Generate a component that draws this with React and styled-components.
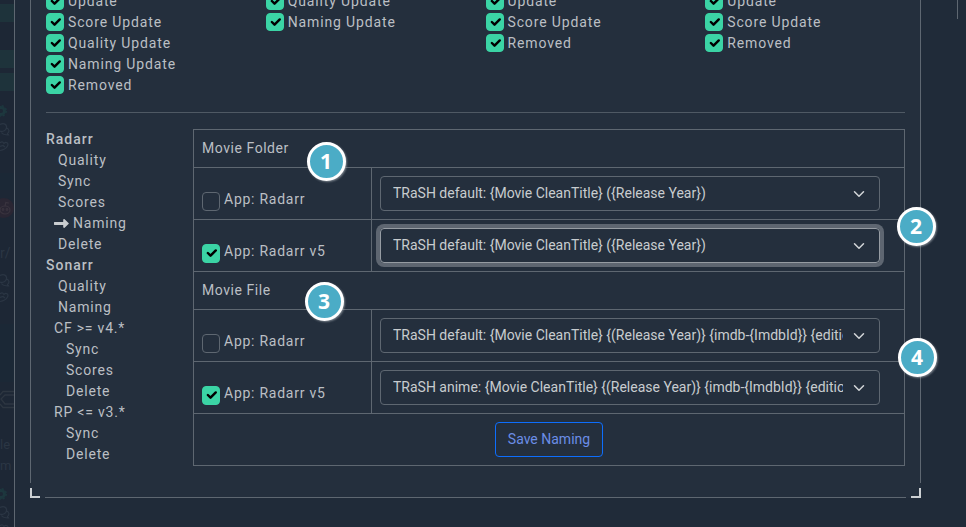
import React from "react";
import styled, { createGlobalStyle, css } from "styled-components";

const line = "#5e6771";

const GlobalStyle = createGlobalStyle`
  * { box-sizing: border-box; }
  body { margin: 0; background: #202b39; overflow: hidden; }
`;

const Page = styled.div`
  position: relative;
  display: flex;
  width: 966px;
  height: 527px;
  overflow: hidden;
  background: #202b39;
  color: #bbbfc4;
  font: 400 14px/21px Roboto, sans-serif;
  letter-spacing: 0.75px;
`;

const Backdrop = styled.aside`
  position: relative;
  width: 15px;
  flex: none;
  overflow: hidden;
  background: #1d2735;
  border-right: 1px solid ${line};
`;

const Ghost = styled.div`
  position: absolute;
  left: ${(p) => p.$x || 0}px;
  top: ${(p) => p.$y}px;
  color: ${(p) => p.$color || "#2b3644"};
  line-height: 0;
  ${(p) => p.$bar && css`
    width: 14px;
    height: ${p.$bar}px;
    background: ${p.$color};
  `}
  ${(p) => p.$text && css`
    line-height: 20px;
    font-size: ${p.$text}px;
    letter-spacing: 0;
    white-space: nowrap;
  `}
`;

const Panel = styled.main`
  position: relative;
  width: 891px;
  height: 498px;
  margin-left: 15px;
  padding: 0 16px;
  background: #242f3d;
`;

const Edge = styled.span`
  position: absolute;
  background: ${line};
  ${(p) => p.$side === "bottom"
    ? css`left: 15px; right: 15px; bottom: 0; height: 1px;`
    : css`top: 0; ${p.$side}: 0; width: 1px; height: 483px;`}
`;

const Corner = styled.span`
  position: absolute;
  bottom: 0;
  ${(p) => p.$side}: 0;
  width: 10px;
  height: 10px;
  border-bottom: 2px solid #ccd0d3;
  border-${(p) => p.$side}: 2px solid #ccd0d3;
`;

const ScrollEdge = styled.span`
  width: 1px;
  height: 19px;
  margin-left: 36px;
  background: ${line};
`;

const Events = styled.section`
  display: grid;
  grid-template-columns: repeat(4, 219.75px);
  height: 113px;
  border-bottom: 1px solid #4f5964;
  width: 859px;
`;

const EventList = styled.ul`
  list-style: none;
  margin: -9px 0 0;
  padding: 0;
`;

const Box = styled.span`
  display: inline-flex;
  flex: none;
  width: 18px;
  height: 18px;
  border-radius: 4px;
  border: 1px solid ${(p) => (p.$on ? "#3bd4a5" : line)};
  background: ${(p) => (p.$on ? "#3bd4a5" : "transparent")};
  svg { display: block; width: 18px; height: 18px; margin: -1px; }
`;

const Event = styled.li`
  display: flex;
  align-items: center;
  gap: 4px;
  height: 21px;
  letter-spacing: 0.86px;
  white-space: nowrap;
  ${Box} { margin-top: -1px; }
`;

const Columns = styled.div`
  display: grid;
  grid-template-columns: 147px 712px;
  margin-top: 16px;
`;

const Nav = styled.nav`
  display: flex;
  flex-direction: column;
`;

const NavItem = styled.a`
  display: flex;
  align-items: center;
  height: 21px;
  padding-left: ${(p) => p.$indent}px;
  font-weight: ${(p) => (p.$heading ? 500 : 400)};
  letter-spacing: ${(p) => (p.$heading ? 1 : 0.8)}px;
  white-space: nowrap;
  svg { margin: 0 4px 0 0; flex: none; }
`;

const Settings = styled.div`
  border: 1px solid ${line};
  height: 337px;
`;

const Title = styled.div`
  height: 38px;
  padding: 8px;
  border-bottom: 1px solid ${line};
  letter-spacing: 0.55px;
`;

const Row = styled.div`
  display: grid;
  grid-template-columns: 178px 1fr;
  height: 52px;
  border-bottom: 1px solid ${line};
`;

const AppCell = styled.label`
  display: flex;
  align-items: center;
  gap: 4px;
  padding: 0 8px 0 8px;
  border-right: 1px solid ${line};
  line-height: 21px;
  ${Box} { margin-top: 16px; height: 19px; }
  span:last-child { margin-top: 12px; }
`;

const FieldCell = styled.div`
  padding: 8px;
`;

const Select = styled.div`
  display: flex;
  align-items: center;
  gap: 10px;
  width: 500px;
  height: 35px;
  padding: 0 14px 0 12px;
  border: 1px solid ${(p) => (p.$focus ? "#969ca3" : line)};
  border-radius: 4px;
  box-shadow: ${(p) => (p.$focus ? "0 0 0 4px #5e6671" : "none")};
  color: #c8cccf;
  letter-spacing: 0;
`;

const Value = styled.span`
  flex: 1;
  overflow: hidden;
  white-space: nowrap;
`;

const Actions = styled.div`
  display: flex;
  justify-content: center;
  padding-top: 8px;
`;

const SaveButton = styled.button`
  width: 108px;
  height: 35px;
  padding: 0;
  border: 1px solid #0d6efd;
  border-radius: 4px;
  background: transparent;
  color: #6b8de6;
  font: inherit;
  letter-spacing: 0;
`;

const Marker = styled.span`
  position: absolute;
  left: ${(p) => p.$x - 19.5}px;
  top: ${(p) => p.$y - 19.5}px;
  display: flex;
  align-items: center;
  justify-content: center;
  width: 39px;
  height: 39px;
  border: 3px solid #fff;
  border-radius: 50%;
  background: #4bacc6;
  box-shadow: 1px 1px 2px rgba(190, 195, 200, 0.55);
  color: #fff;
  font: 700 21px/21px "Open Sans", sans-serif;
  letter-spacing: 0;
`;

const Checkbox = ({ on }) => (
  <Box $on={on}>
    {on && (
      <svg viewBox="0 0 20 20" fill="none" stroke="#000" strokeWidth="2.7" strokeLinecap="round" strokeLinejoin="round">
        <path d="m6.5 10 3 3 5.8-5.8" />
      </svg>
    )}
  </Box>
);

const Arrow = () => (
  <svg width="15" height="9" viewBox="0 0 15 9" fill="#c9cdd0">
    <path d="M.5 3h8.7V.9c0-.8.8-1.1 1.4-.6l3.9 3.6c.4.4.4.8 0 1.2l-3.9 3.6c-.6.5-1.4.2-1.4-.6V6H.5c-.3 0-.5-.2-.5-.5v-2c0-.3.2-.5.5-.5Z" />
  </svg>
);

const Chevron = () => (
  <svg width="12" height="12" viewBox="0 0 16 16" fill="none" stroke="#d3d6d9" strokeWidth="2" strokeLinecap="round" strokeLinejoin="round">
    <path d="m2 5 6 6 6-6" />
  </svg>
);

const GearGhost = () => (
  <svg width="14" height="14" viewBox="0 0 14 14" fill="none" stroke="#1d373e">
    <circle cx="1" cy="7" r="3.5" strokeWidth="3" />
    <circle cx="1" cy="7" r="5.2" strokeWidth="1.6" strokeDasharray="2.1 2" />
  </svg>
);

const ChatGhost = () => (
  <svg width="14" height="32" viewBox="0 0 14 32" fill="none" stroke="#2b3644" strokeWidth="1.2">
    <path d="M0 1.5c4-2 7 0 6.500 3S3 9 0 8M6 4.500c3 1 4 4 1.500 6l1 1.500C6 12 3 12 1.500 9.500" />
    <path d="M0 20c2-2.500 3.500-.5 4 .5 2-2.500 5-.5 3.500 2.500C6 26 3 27 0 27.500M0 23.500l3-1 2 1.500" />
  </svg>
);

const RobotGhost = () => (
  <svg width="14" height="20" viewBox="0 0 14 20" fill="none" stroke="#39333e" strokeWidth="1.2">
    <circle cx="4" cy="10" r="10" fill="#2a2633" stroke="none" />
    <ellipse cx="5" cy="12" rx="5" ry="4" />
    <circle cx="3" cy="11.500" r=".8" />
    <circle cx="7" cy="11.500" r=".8" />
    <path d="m5 8 .8-3.500 3 .7" />
  </svg>
);

const KeyGhost = () => (
  <svg width="14" height="20" viewBox="0 0 14 20" fill="none" stroke="#2d3641">
    <path d="M14 1.500H3L0 5M14 5H5L1 9l4 5h9M0 14l3 3.500h11" strokeWidth="1.3" />
  </svg>
);

const events = [
  ["Update", "Score Update", "Quality Update", "Naming Update", "Removed"],
  ["Quality Update", "Naming Update"],
  ["Update", "Score Update", "Removed"],
  ["Update", "Score Update", "Removed"],
];

const nav = [
  ["Radarr", 0, true],
  ["Quality", 12],
  ["Sync", 12],
  ["Scores", 12],
  ["Naming", 8, false, true],
  ["Delete", 12],
  ["Sonarr", 0, true],
  ["Quality", 12],
  ["Naming", 12],
  ["CF >= v4.*", 8],
  ["Sync", 20],
  ["Scores", 20],
  ["Delete", 20],
  ["RP <= v3.*", 8],
  ["Sync", 20],
  ["Delete", 20],
];

const groups = [
  {
    title: "Movie Folder",
    rows: [
      { app: "App: Radarr", value: "TRaSH default: {Movie CleanTitle} ({Release Year})" },
      { app: "App: Radarr v5", on: true, focus: true, value: "TRaSH default: {Movie CleanTitle} ({Release Year})" },
    ],
  },
  {
    title: "Movie File",
    rows: [
      { app: "App: Radarr", value: "TRaSH default: {Movie CleanTitle} {(Release Year)} {imdb-{ImdbId}} {edition" },
      { app: "App: Radarr v5", on: true, value: "TRaSH anime: {Movie CleanTitle} {(Release Year)} {imdb-{ImdbId}} {edition" },
    ],
  },
];

const markers = [
  [1, 326, 161],
  [2, 916, 226],
  [3, 324, 301],
  [4, 917, 357],
];

export default function App() {
  return (
    <Page>
      <GlobalStyle />
      <Backdrop>
        <Ghost $y={4} $bar={18} $color="#1e333b" />
        <Ghost $y={50} $bar={18} $color="#1e333b" />
        <Ghost $y={73} $bar={18} $color="#1e333b" />
        <Ghost $y={104}><GearGhost /></Ghost>
        <Ghost $y={123}><ChatGhost /></Ghost>
        <Ghost $y={173} $bar={17} $color="#1b2836" />
        <Ghost $y={198}><RobotGhost /></Ghost>
        <Ghost $y={243} $text={14}>r/</Ghost>
        <Ghost $y={274}><ChatGhost /></Ghost>
        <Ghost $y={324} $bar={58} $color="#1b2836" />
        <Ghost $y={390}><KeyGhost /></Ghost>
        <Ghost $y={435} $text={13}>le</Ghost>
        <Ghost $y={456} $text={13}>m</Ghost>
        <Ghost $y={487}><GearGhost /></Ghost>
        <Ghost $y={506}><ChatGhost /></Ghost>
      </Backdrop>
      <Panel>
        <Events>
          {events.map((list, i) => (
            <EventList key={i}>
              {list.map((name) => (
                <Event key={name}><Checkbox on />{name}</Event>
              ))}
            </EventList>
          ))}
        </Events>
        <Columns>
          <Nav>
            {nav.map(([label, indent, heading, active], i) => (
              <NavItem key={i} $indent={indent} $heading={heading}>
                {active && <Arrow />}{label}
              </NavItem>
            ))}
          </Nav>
          <Settings>
            {groups.map((group) => (
              <React.Fragment key={group.title}>
                <Title>{group.title}</Title>
                {group.rows.map((row) => (
                  <Row key={row.app}>
                    <AppCell><Checkbox on={row.on} /><span>{row.app}</span></AppCell>
                    <FieldCell>
                      <Select $focus={row.focus}><Value>{row.value}</Value><Chevron /></Select>
                    </FieldCell>
                  </Row>
                ))}
              </React.Fragment>
            ))}
            <Actions><SaveButton>Save Naming</SaveButton></Actions>
          </Settings>
        </Columns>
        <Edge $side="left" />
        <Edge $side="right" />
        <Edge $side="bottom" />
        <Corner $side="left" />
        <Corner $side="right" />
      </Panel>
      <ScrollEdge />
      {markers.map(([n, x, y]) => <Marker key={n} $x={x} $y={y}>{n}</Marker>)}
    </Page>
  );
}
